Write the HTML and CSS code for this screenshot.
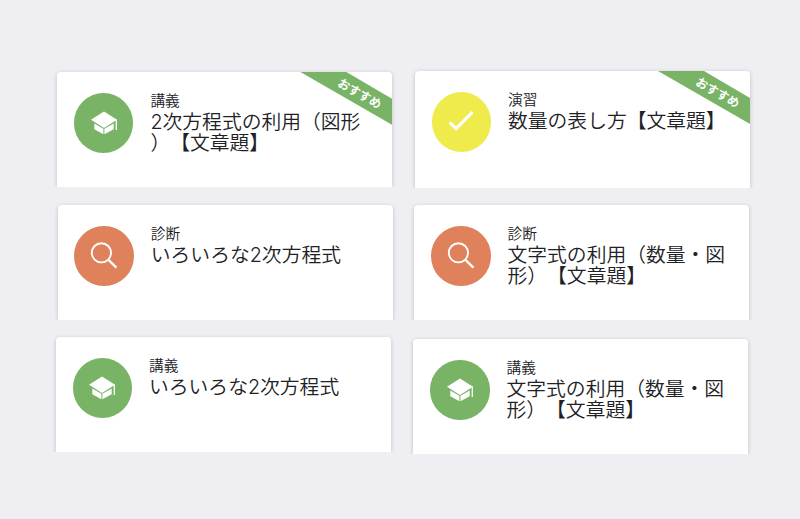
FILE: index.html
```html
<!DOCTYPE html>
<html lang="ja">
<head>
  <meta charset="UTF-8">
  <meta name="viewport" content="width=device-width, initial-scale=1.0">
  <title>おすすめの講義</title>
  <link rel="stylesheet" href="styles.css">
</head>
<body>

<svg class="defs" width="0" height="0">
  <symbol id="cap" viewBox="0 0 30 30">
    <path fill="#fff" d="M15 3.5 L28 11.8 L15 20 L2 11.8 Z"/>
    <path fill="#fff" d="M5.3 15.4 L14.4 20.8 V26.2 L5.3 21.2 Z M24.7 15.4 L15.4 20.8 V26.2 L24.7 21.2 Z"/>
    <path fill="none" stroke="#fff" stroke-width="1.3" d="M27.3 11.6 V22"/>
  </symbol>
  <symbol id="check" viewBox="0 0 30 30">
    <path fill="none" stroke="#fff" stroke-width="3.2" d="M3.6 15.4 L10.2 21.6 L26.4 5.2"/>
  </symbol>
  <symbol id="search" viewBox="0 0 30 30">
    <circle cx="12.4" cy="11.8" r="9.6" fill="none" stroke="#fff" stroke-width="1.9"/>
    <path fill="none" stroke="#fff" stroke-width="2.2" d="M19.2 18.6 L27.4 26.6"/>
  </symbol>
</svg>

<main class="board">
  <div class="column column-left">
    <article class="card">
      <div class="icon lecture"><svg><use href="#cap"/></svg></div>
      <div class="text">
        <p class="type">講義</p>
        <h2 class="title">2次方程式の利用（図形<br>）【文章題】</h2>
      </div>
      <div class="ribbon"><span>おすすめ</span></div>
    </article>
    <article class="card">
      <div class="icon diagnosis"><svg><use href="#search"/></svg></div>
      <div class="text">
        <p class="type">診断</p>
        <h2 class="title">いろいろな2次方程式</h2>
      </div>
    </article>
    <article class="card">
      <div class="icon lecture"><svg><use href="#cap"/></svg></div>
      <div class="text">
        <p class="type">講義</p>
        <h2 class="title">いろいろな2次方程式</h2>
      </div>
    </article>
  </div>

  <div class="column column-right">
    <article class="card">
      <div class="icon exercise"><svg><use href="#check"/></svg></div>
      <div class="text">
        <p class="type">演習</p>
        <h2 class="title">数量の表し方【文章題】</h2>
      </div>
      <div class="ribbon"><span>おすすめ</span></div>
    </article>
    <article class="card">
      <div class="icon diagnosis"><svg><use href="#search"/></svg></div>
      <div class="text">
        <p class="type">診断</p>
        <h2 class="title">文字式の利用（数量・図<br>形）【文章題】</h2>
      </div>
    </article>
    <article class="card">
      <div class="icon lecture"><svg><use href="#cap"/></svg></div>
      <div class="text">
        <p class="type">講義</p>
        <h2 class="title">文字式の利用（数量・図<br>形）【文章題】</h2>
      </div>
    </article>
  </div>
</main>

</body>
</html>
```
FILE: styles.css
```css
* {
  box-sizing: border-box;
}

body {
  margin: 0;
  min-height: 519px;
  background-color: #eeeef3;
  color: #202124;
  font-family: "Noto Sans CJK JP", sans-serif;
  font-weight: 350;
  text-spacing-trim: space-all;
}

.defs {
  display: block;
}

.board {
  display: flex;
  gap: 22px;
  padding: 71px 0 0 57px;
}

.column {
  width: 335px;
}

.column-left {
  padding-top: 1px;
}

.card {
  position: relative;
  display: flex;
  height: 115px;
  padding: 21px 0 0 17px;
  background-color: #fff;
  border-radius: 4px 4px 0 0;
  box-shadow: 0 1px 4px rgba(0, 0, 0, 0.2);
  clip-path: inset(-6px -6px 0 -6px);
}

/* the cards sit slightly off from each other */
.column-left .card:nth-child(1) {
  margin: 0 -0.4px 18px 0.4px;
  padding-left: 16.5px;
}

.column-left .card:nth-child(2) {
  margin: 0 -1px 17px 1px;
  padding-left: 16.3px;
}

.column-left .card:nth-child(3) {
  margin: 0 1px 0 -1px;
  padding-left: 16.5px;
}

.column-right .card:nth-child(1) {
  height: 117px;
  margin: 0 -1px 17px 1px;
  padding-left: 16.5px;
}

.column-right .card:nth-child(2) {
  margin-bottom: 19px;
}

.column-right .card:nth-child(3) {
  margin: 0 1px 0 -1px;
}

.icon {
  display: flex;
  justify-content: center;
  align-items: center;
  width: 59.5px;
  height: 59.5px;
  border-radius: 50%;
}

.icon svg {
  width: 30px;
  height: 30px;
}

.lecture {
  background-color: #79b466;
}

.exercise {
  background-color: #efeb4d;
}

.diagnosis {
  background-color: #df825b;
}

.text {
  margin: -3px 0 0 17px;
}

.type {
  margin: 0 0 3px;
  font-size: 14.7px;
  line-height: 19px;
}

.title {
  margin: 0;
  font-family: Inter, "Noto Sans CJK JP", sans-serif;
  font-size: 19.8px;
  font-weight: 350;
  line-height: 21px;
  white-space: nowrap;
}

.ribbon {
  position: absolute;
  top: 0;
  right: 0;
  width: 92px;
  height: 53px;
  background-color: #79b466;
  clip-path: polygon(0 0, 46px 0, 100% 27px, 100% 100%);
}

.ribbon span {
  position: absolute;
  top: 12px;
  left: 36px;
  color: #fff;
  font-size: 12px;
  font-weight: 700;
  line-height: 18px;
  white-space: nowrap;
  transform: rotate(29.5deg);
}
```
